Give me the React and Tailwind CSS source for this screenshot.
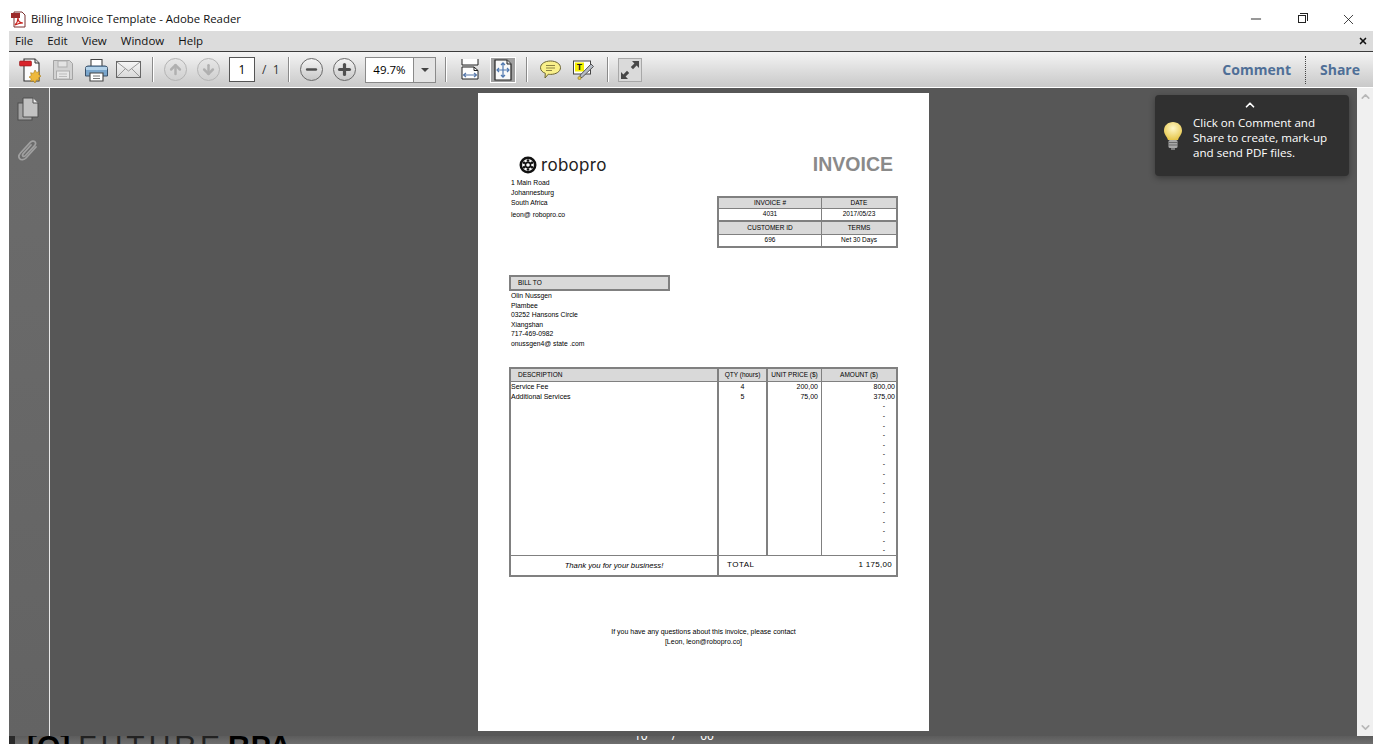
import { ChevronUp, ChevronDown, Minus, X, Plus, ArrowUp, ArrowDown } from 'lucide-react'

const UI_FONT = "font-['Open_Sans','Noto_Sans',sans-serif]"
const DOC_FONT = "font-['Liberation_Sans',Arial,sans-serif]"

const DASHES = Array.from({ length: 16 })
const ADDRESS = ['1 Main Road', 'Johannesburg', 'South Africa']
const BILL_TO = ['Olin Nussgen', 'Plambee', '03252 Hansons Circle', 'Xiangshan', '717-469-0982', 'onussgen4@ state .com']

function PdfIcon() {
  return (
    <svg width="17" height="17" viewBox="0 0 17 17">
      <path d="M4 1h8l3 3v12H4z" fill="#fff" stroke="#7a3030" />
      <rect x="1" y="2" width="9" height="5" fill="#9c2a2a" />
      <path d="M5 14c2-2 3-5 3-7 0 3 2 5 5 5-3 0-6 1-8 2z" fill="none" stroke="#c8201c" strokeWidth="1.2" />
    </svg>
  )
}

function NewIcon() {
  return (
    <svg width="24" height="26" viewBox="0 0 24 26">
      <path d="M5 2h11l4 4v18H5z" fill="#fbfbfb" stroke="#333" strokeWidth="1.1" />
      <path d="M16 2v4h4" fill="#ddd" stroke="#333" />
      <rect x="0.5" y="4" width="12" height="5" rx="1" fill="#d8232a" stroke="#8e1a1a" strokeWidth="0.6" />
      <path d="M16 13l1.6 2.4 2.8-.7-.7 2.8 2.3 1.6-2.3 1.6.7 2.8-2.8-.7L16 26l-1.6-2.2-2.8.7.7-2.8-2.3-1.6 2.3-1.6-.7-2.8 2.8.7z" fill="#eeb93c" stroke="#a87a16" strokeWidth="0.6" />
    </svg>
  )
}

function SaveIcon() {
  return (
    <svg width="22" height="22" viewBox="0 0 22 22">
      <path d="M1.5 1.500h16l3 3v16h-19z" fill="#d2d2d2" stroke="#a4a4a4" />
      <rect x="6" y="2" width="9" height="6" fill="#e4e4e4" stroke="#adadad" />
      <rect x="4.500" y="12" width="13" height="8" fill="#e6e6e6" stroke="#adadad" />
      <path d="M7 15h8M7 17.500h8" stroke="#bbb" />
    </svg>
  )
}

function PrintIcon() {
  return (
    <svg width="23" height="24" viewBox="0 0 23 24">
      <path d="M6 9V1.500h11V9" fill="#fff" stroke="#444" strokeWidth="1.100" />
      <path d="M3 8h17a2.500 2.500 0 0 1 2.500 2.500V18H.5v-7.500A2.500 2.500 0 0 1 3 8z" fill="#7aa6cc" stroke="#3a5068" strokeWidth="1" />
      <rect x="1" y="9" width="21" height="3" fill="#b4d2e9" />
      <path d="M5 15h13v8H5z" fill="#fff" stroke="#444" strokeWidth="1.100" />
      <path d="M8 18h7M8 20.500h7" stroke="#777" />
    </svg>
  )
}

function MailIcon() {
  return (
    <svg width="25" height="17" viewBox="0 0 25 17">
      <defs>
        <linearGradient id="mail" x1="0" y1="0" x2="0" y2="1">
          <stop offset="0" stopColor="#f6f6f6" />
          <stop offset="1" stopColor="#d8d8d8" />
        </linearGradient>
      </defs>
      <rect x="0.500" y="0.500" width="24" height="16" fill="url(#mail)" stroke="#666" />
      <path d="M1 1l11.500 9L24 1M1 16l8.500-8.500M24 16l-8.500-8.500" fill="none" stroke="#999" />
    </svg>
  )
}

function RoundButton({ size = 23, children, className = '' }) {
  return (
    <div
      className={`flex shrink-0 items-center justify-center rounded-full border bg-gradient-to-b ${className}`}
      style={{ width: size, height: size }}
    >
      {children}
    </div>
  )
}

function FitWidthIcon() {
  return (
    <svg width="18" height="21" viewBox="0 0 18 21">
      <path d="M1 0v6h16V0" fill="#fff" stroke="#222" />
      <path d="M1 8h12l4 3.500V20H1z" fill="#fff" stroke="#222" />
      <path d="M13 8v3.500h4" fill="none" stroke="#222" />
      <path d="M2.500 16h13M5 14l-2.500 2L5 18M13 14l2.500 2-2.500 2" fill="none" stroke="#5577aa" strokeWidth="1.200" />
    </svg>
  )
}

function FitPageIcon() {
  return (
    <svg width="18" height="22" viewBox="0 0 18 22">
      <path d="M1 1h12l4 4v16H1z" fill="#f8f8f8" stroke="#222" strokeWidth="1.200" />
      <path d="M13 1v4h4" fill="#ddd" stroke="#222" />
      <path d="M9 4v14M3 11h12M7 6l2-2.200L11 6M7 16l2 2.200 2-2.200M5 9l-2 2 2 2M13 9l2 2-2 2" fill="none" stroke="#4f78b0" strokeWidth="1.200" />
    </svg>
  )
}

function CommentIcon() {
  return (
    <svg width="21" height="19" viewBox="0 0 21 19">
      <path d="M10.500 1C16 1 20.500 3.800 20.500 7.700s-4.500 6.700-10 6.700c-.8 0-1.500 0-2.200-.2L5 18l.3-4.700C2.300 12.200.5 10.200.5 7.700.5 3.800 5 1 10.500 1z" fill="#f9f08a" stroke="#6b6433" />
      <path d="M6 5.500h9M6 8h9M6 10.500h6" stroke="#8b8344" />
    </svg>
  )
}

function HighlightIcon() {
  return (
    <svg width="21" height="20" viewBox="0 0 21 20">
      <rect x="0.500" y="1" width="17" height="13" fill="#fff" stroke="#444" />
      <rect x="2" y="2.500" width="9" height="9" fill="#f4f000" />
      <text x="6.500" y="10" textAnchor="middle" fontSize="9" fontWeight="700" fontFamily="Liberation Mono" fill="#222">T</text>
      <path d="M18 4l2.500 2.500L9.500 17l-3 1.500 .8-3.500z" fill="#b6bcc6" stroke="#555" />
      <circle cx="6.500" cy="18" r="1.600" fill="#e8c84a" stroke="#8a7420" strokeWidth="0.600" />
    </svg>
  )
}

function ExpandIcon() {
  return (
    <div className="flex h-[24px] w-[24px] items-center justify-center border border-[#a8a8a8] bg-[#dadada]">
      <svg width="20" height="20" viewBox="0 0 20 20">
        <path d="M12 1h7v7l-2.400-2.400-3.600 3.600-2.200-2.200 3.600-3.600z" fill="#484848" />
        <path d="M8 19H1v-7l2.400 2.400 3.600-3.600 2.200 2.200-3.600 3.600z" fill="#484848" />
      </svg>
    </div>
  )
}

function Bulb() {
  return (
    <svg width="20" height="30" viewBox="0 0 20 30">
      <defs>
        <radialGradient id="bulb" cx="50%" cy="35%" r="65%">
          <stop offset="0" stopColor="#fff8c8" />
          <stop offset="1" stopColor="#e6c64a" />
        </radialGradient>
      </defs>
      <path d="M10 1c5 0 9 3.500 9 8.500 0 4-3 6-4 9.500H5C4 15.500 1 13.500 1 9.500 1 4.500 5 1 10 1z" fill="url(#bulb)" />
      <rect x="5.500" y="19" width="9" height="8" rx="1.500" fill="#a8a8a8" />
      <path d="M5.500 21.500h9M5.500 24h9" stroke="#6a6a6a" />
      <path d="M8 27h4v2H8z" fill="#777" />
    </svg>
  )
}

function PagesIcon() {
  return (
    <svg width="22" height="24" viewBox="0 0 22 24">
      <rect x="1" y="6" width="14" height="17" fill="#a4a4a4" stroke="#4e4e4e" />
      <path d="M6 1h10l5 5v14H6z" fill="#c2c2c2" stroke="#4e4e4e" />
      <path d="M16 1v5h5" fill="#ececec" stroke="#4e4e4e" />
    </svg>
  )
}

function ClipIcon() {
  return (
    <svg width="22" height="24" viewBox="0 0 22 24">
      <path d="M19 7l-10 11c-1.800 2-5 2.300-6.300.8-1.300-1.500-.8-4 1-6l9.600-10.400c1.400-1.500 3.500-1.700 4.500-.7 1 1 .8 3-.6 4.500L8.500 15.500c-.9 1-2 1.200-2.600.6-.6-.6-.4-1.700.5-2.700L14 5" fill="none" stroke="#a0a0a0" strokeWidth="1.700" strokeLinecap="round" />
    </svg>
  )
}

function RoboproLogo() {
  return (
    <div className="flex h-[18px] items-center gap-[4px] pl-[10px]">
      <svg width="18" height="18" viewBox="0 0 18 18">
        <circle cx="9" cy="9" r="7.200" fill="none" stroke="#111" strokeWidth="2.600" />
        <circle cx="9" cy="9" r="2.600" fill="none" stroke="#111" strokeWidth="1.600" />
        <g fill="#111">
          <circle cx="9" cy="4.500" r="1.300" />
          <circle cx="9" cy="13.500" r="1.300" />
          <circle cx="5.100" cy="6.750" r="1.300" />
          <circle cx="12.900" cy="6.750" r="1.300" />
          <circle cx="5.100" cy="11.250" r="1.300" />
          <circle cx="12.900" cy="11.250" r="1.300" />
        </g>
      </svg>
      <span className="font-['Inter',sans-serif] text-[17px] leading-none tracking-[0.3px] text-[#222]">robopro</span>
    </div>
  )
}

function TopTable() {
  const head = 'flex items-center justify-center bg-[#d9d9d9]'
  const cell = 'flex items-center justify-center bg-white'
  return (
    <div className="grid w-[181px] grid-cols-[103px_74px] grid-rows-[11px_13px_13px_11px] border-2 border-[#808080] text-[6.500px] leading-none text-black">
      <div className={`${head} border-r border-b border-[#808080]`}>INVOICE #</div>
      <div className={`${head} border-b border-[#808080]`}>DATE</div>
      <div className={`${cell} border-r border-b-2 border-[#808080]`}>4031</div>
      <div className={`${cell} border-b-2 border-[#808080]`}>2017/05/23</div>
      <div className={`${head} border-r border-b border-[#808080]`}>CUSTOMER ID</div>
      <div className={`${head} border-b border-[#808080]`}>TERMS</div>
      <div className={`${cell} border-r border-[#808080]`}>696</div>
      <div className={cell}>Net 30 Days</div>
    </div>
  )
}

function ItemsTable() {
  return (
    <div className="flex w-[389px] flex-col border-2 border-[#808080] text-[6.500px] leading-none text-black">
      <div className="grid h-[13px] grid-cols-[208px_49px_54px_74px] border-b border-[#808080] bg-[#d9d9d9]">
        <div className="flex items-center border-r-2 border-[#808080] pl-[7px]">DESCRIPTION</div>
        <div className="flex items-center justify-center border-r-2 border-[#808080]">QTY (hours)</div>
        <div className="flex items-center justify-center border-r border-[#808080]">UNIT PRICE ($)</div>
        <div className="flex items-center justify-center">AMOUNT ($)</div>
      </div>
      <div className="grid h-[173px] grid-cols-[208px_49px_54px_74px] text-[7px]">
        <div className="flex flex-col border-r-2 border-[#808080]">
          <div className="flex h-[9.600px] items-center">Service Fee</div>
          <div className="flex h-[9.600px] items-center">Additional Services</div>
        </div>
        <div className="flex flex-col border-r-2 border-[#808080] text-center">
          <div className="flex h-[9.600px] items-center justify-center">4</div>
          <div className="flex h-[9.600px] items-center justify-center">5</div>
        </div>
        <div className="flex flex-col border-r border-[#808080] pr-[3px]">
          <div className="flex h-[9.600px] items-center justify-end">200,00</div>
          <div className="flex h-[9.600px] items-center justify-end">75,00</div>
        </div>
        <div className="flex flex-col pr-[1px]">
          <div className="flex h-[9.600px] items-center justify-end">800,00</div>
          <div className="flex h-[9.600px] items-center justify-end">375,00</div>
          {DASHES.map((_, i) => (
            <div key={i} className="flex h-[9.600px] items-center justify-end pr-[10px]">-</div>
          ))}
        </div>
      </div>
      <div className="grid h-[20px] grid-cols-[208px_1fr] border-t border-[#808080] text-[8px]">
        <div className="flex items-center justify-center border-r-2 border-[#808080] text-[7.700px] italic">Thank you for your business!</div>
        <div className="flex items-center justify-between pr-[4px] pl-[8px]">
          <span className="tracking-[0.5px]">TOTAL</span>
          <span className="tracking-[0.3px]">1 175,00</span>
        </div>
      </div>
    </div>
  )
}

function InvoicePage() {
  return (
    <div className={`flex h-[638px] w-[451px] shrink-0 flex-col bg-white px-[31px] pt-[63px] ${DOC_FONT}`}>
      <div className="flex h-[18px] items-center justify-between pr-[5px]">
        <RoboproLogo />
        <span className="text-[19.500px] leading-none font-bold text-[#8a8a8a]">INVOICE</span>
      </div>
      <div className="mt-[4px] flex items-start justify-between">
        <div className="flex flex-col pl-[2px] text-[6.800px] leading-[10px] text-black">
          {ADDRESS.map(line => <span key={line}>{line}</span>)}
          <span className="mt-[2px]">leon@ robopro.co</span>
        </div>
        <div className="mt-[18px]">
          <TopTable />
        </div>
      </div>
      <div className="mt-[27px] flex h-[16px] w-[161px] items-center border-2 border-[#808080] bg-[#d9d9d9] pl-[7px] text-[6.500px] leading-none text-black">BILL TO</div>
      <div className="flex flex-col pl-[2px] text-[6.800px] leading-[9.600px] text-black">
        {BILL_TO.map(line => <span key={line}>{line}</span>)}
      </div>
      <div className="mt-[18.400px]">
        <ItemsTable />
      </div>
      <div className="mt-[50px] flex flex-col items-center text-[7px] leading-[10px] text-black">
        <span>If you have any questions about this invoice, please contact</span>
        <span>[Leon, leon@robopro.co]</span>
      </div>
    </div>
  )
}

function Separator() {
  return <div className="h-[25px] w-[2px] shrink-0 border-r border-white bg-[#8a8a8a]" />
}

function Toolbar() {
  return (
    <div className={`flex h-[37px] shrink-0 items-center border-t border-b border-t-[#3c3c3c] border-b-white bg-gradient-to-b from-[#f4f4f4] to-[#c9c9c9] text-[12px] ${UI_FONT}`}>
      <div className="ml-[10px] w-[33px]"><NewIcon /></div>
      <div className="w-[33px]"><SaveIcon /></div>
      <div className="w-[31px]"><PrintIcon /></div>
      <div className="w-[36px]"><MailIcon /></div>
      <Separator />
      <div className="ml-[10px] flex items-center gap-[10px]">
        <RoundButton className="border-[#b4b4b4] from-[#e6e6e6] to-[#d0d0d0]">
          <ArrowUp size={15} strokeWidth={4} className="text-[#b0b0b0]" />
        </RoundButton>
        <RoundButton className="border-[#b4b4b4] from-[#e6e6e6] to-[#d0d0d0]">
          <ArrowDown size={15} strokeWidth={4} className="text-[#b0b0b0]" />
        </RoundButton>
      </div>
      <div className="ml-[9px] flex h-[25px] w-[26px] items-center justify-center border border-[#555] bg-white text-black">1</div>
      <span className="ml-[7px] w-[26px] text-[#333]">/&nbsp;&nbsp;1</span>
      <Separator />
      <div className="ml-[10px] flex items-center gap-[10px]">
        <RoundButton className="border-[#6a6a6a] from-[#f4f4f4] to-[#c8c8c8]">
          <Minus size={15} strokeWidth={4} className="text-[#505050]" />
        </RoundButton>
        <RoundButton className="border-[#6a6a6a] from-[#f4f4f4] to-[#c8c8c8]">
          <Plus size={17} strokeWidth={4.500} className="text-[#505050]" />
        </RoundButton>
      </div>
      <div className="ml-[9px] flex h-[26px] w-[71px] border border-[#8a8a8a] bg-white">
        <div className="flex w-[48px] items-center justify-center border-r border-[#8a8a8a] text-[11.500px] text-black">49.7%</div>
        <div className="flex flex-1 items-center justify-center bg-[#e4e4e4]">
          <div className="h-0 w-0 border-x-[4px] border-t-[4px] border-x-transparent border-t-[#444]" />
        </div>
      </div>
      <div className="ml-[9px]"><Separator /></div>
      <div className="ml-[14px]"><FitWidthIcon /></div>
      <div className="ml-[11px] flex h-[26px] w-[26px] items-center justify-center border border-white bg-[#a0a0a0]"><FitPageIcon /></div>
      <div className="ml-[10px]"><Separator /></div>
      <div className="ml-[12px]"><CommentIcon /></div>
      <div className="ml-[12px]"><HighlightIcon /></div>
      <div className="ml-[13px]"><Separator /></div>
      <div className="ml-[9px]"><ExpandIcon /></div>
      <div className="ml-auto flex h-full items-center pr-[13px] text-[14px] font-bold text-[#4f6f97]">
        <span>Comment</span>
        <div className="mr-[14px] ml-[14px] h-[28px] border-l border-dotted border-[#444]" />
        <span>Share</span>
      </div>
    </div>
  )
}

function BottomStrip() {
  return (
    <div className="flex h-[8px] shrink-0 overflow-hidden bg-gradient-to-b from-[#5c5c5c] to-[#6e6e6e]">
      <div className="h-full w-[6px] shrink-0 bg-[#2a2a2a]" />
      <div className="ml-[12px] flex w-[282px] shrink-0 items-start font-['Liberation_Sans',sans-serif] text-[30px] leading-[30px] text-black">
        <span className="-mt-[5px] font-bold">[O]</span>
        <span className="-mt-[5px] ml-[8px] tracking-[4px] text-[#222]">FUTURE</span>
        <span className="-mt-[5px] ml-[4px] tracking-[1px] font-bold">RPA</span>
      </div>
      <div className="ml-[325px] flex w-[120px] gap-[24px] text-[12px] leading-[14px] text-white">
        <span className="-mt-[7px]">10</span>
        <span className="-mt-[7px]">/</span>
        <span className="-mt-[7px]">00</span>
      </div>
    </div>
  )
}

export default function App() {
  return (
    <div className="relative flex h-[744px] w-[1382px] flex-col overflow-hidden bg-white">
      <div className={`flex h-[31px] shrink-0 items-center pt-[7px] pl-[10px] text-[11.400px] text-[#111] ${UI_FONT}`}>
        <PdfIcon />
        <span className="ml-[4px]">Billing Invoice Template - Adobe Reader</span>
        <div className="ml-auto flex items-center text-[#111]">
          <Minus size={16} strokeWidth={1.300} />
          <div className="ml-[30px] flex h-[16px] w-[16px] items-center justify-center">
            <div className="relative h-[8px] w-[8px] border border-[#222] before:absolute before:-top-[3px] before:-right-[3px] before:h-[8px] before:w-[8px] before:border-t before:border-r before:border-[#222]" />
          </div>
          <X size={17} strokeWidth={1.100} className="mr-[25px] ml-[30px]" />
        </div>
      </div>
      <div className="mx-[9px] flex min-h-0 flex-1 flex-col">
        <div className={`flex h-[20px] shrink-0 items-center justify-between bg-[#dcdcdc] pr-[5px] pl-[6px] text-[11.500px] text-[#111] ${UI_FONT}`}>
          <div className="flex gap-[14px]">
            <span>File</span>
            <span>Edit</span>
            <span>View</span>
            <span>Window</span>
            <span>Help</span>
          </div>
          <X size={10} strokeWidth={4} />
        </div>
        <Toolbar />
        <div className="flex min-h-0 flex-1">
          <div className="flex w-[41px] shrink-0 flex-col items-center gap-[19px] border-r border-r-[#e8e8e8] bg-gradient-to-b from-[#6c6c6c] to-[#636363] pt-[9px] pr-[2px]">
            <PagesIcon />
            <ClipIcon />
          </div>
          <div className="flex flex-1 justify-center bg-[#575757] pt-[5px]">
            <InvoicePage />
          </div>
          <div className="flex w-[16px] shrink-0 flex-col items-center justify-between bg-[#f0f0f0] py-[2px] text-[#b8b8b8]">
            <ChevronUp size={13} strokeWidth={3} />
            <ChevronDown size={13} strokeWidth={3} />
          </div>
        </div>
        <BottomStrip />
      </div>
      <div className={`absolute top-[95px] left-[1155px] flex h-[81px] w-[194px] items-start rounded-[4px] bg-[#303030] pt-[20px] pl-[8px] text-[11.600px] leading-[15px] text-white shadow-[0_2px_6px_rgba(0,0,0,0.35)] ${UI_FONT}`}>
        <ChevronUp size={14} strokeWidth={3} className="absolute top-[3px] left-[88px]" />
        <div className="mt-[6px] mr-[10px] shrink-0"><Bulb /></div>
        <p>Click on Comment and<br />Share to create, mark-up<br />and send PDF files.</p>
      </div>
    </div>
  )
}
